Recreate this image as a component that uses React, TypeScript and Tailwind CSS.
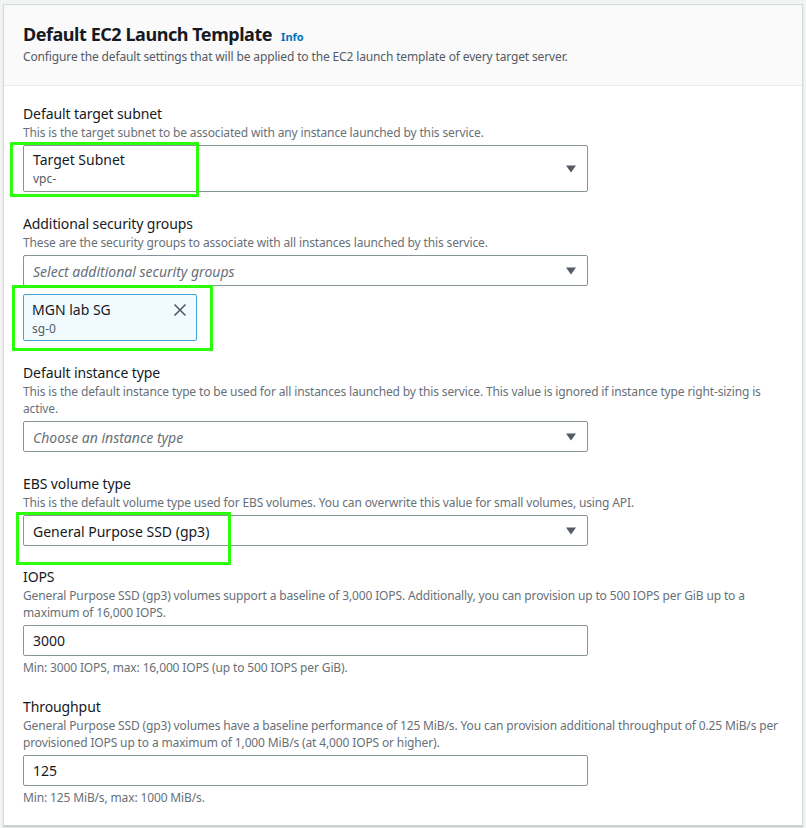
import React from "react";

const Caret: React.FC = () => (
  <svg width="12" height="8" viewBox="0 0 12 8" className="shrink-0">
    <path d="M1 0.5 H11 L6 7.5 Z" fill="#545b64" />
  </svg>
);

const Field: React.FC<{
  label: string;
  desc: string;
  className?: string;
  children: React.ReactNode;
}> = ({ label, desc, className, children }) => (
  <div className={className}>
    <div className="text-[14px] leading-[21px] tracking-[-0.1px] text-[#16191f]">{label}</div>
    <div className="text-[12px] leading-[17px] tracking-[-0.14px] text-[#687078]">{desc}</div>
    <div className="mt-[4px]">{children}</div>
  </div>
);

const Select: React.FC<{ children: React.ReactNode; tall?: boolean }> = ({
  children,
  tall,
}) => (
  <div
    className={
      "w-[565px] border border-[#879596] rounded-[2px] bg-white flex items-center justify-between pl-[9px] pr-[10px] " +
      (tall ? "h-[47px]" : "h-[31px]")
    }
  >
    <div className="min-w-0">{children}</div>
    <Caret />
  </div>
);

const Hint: React.FC<{ children: React.ReactNode }> = ({ children }) => (
  <div className="mt-[3px] text-[12px] leading-[18px] tracking-[-0.14px] text-[#687078]">{children}</div>
);

export default function App() {
  return (
    <div
      className="min-h-[828px] bg-[#f2f3f3] pt-[4px] pl-[3px] pr-[3px]"
      style={{ fontFamily: '"Noto Sans", "Open Sans", Arial, sans-serif' }}
    >
      <div className="relative w-[800px] h-[822px] bg-white border border-[#d5dbdb] shadow-[0_1px_1px_rgba(0,28,36,0.2)]">
        <div className="h-[81px] bg-[#fafafa] border-b border-[#eaeded] px-[19px] pt-[17px]">
          <div className="flex items-baseline gap-[9px]">
            <h1 className="text-[18px] leading-[24px] font-bold tracking-[-0.45px] text-[#16191f]">
              Default EC2 Launch Template
            </h1>
            <span className="text-[11px] font-bold text-[#0073bb]">Info</span>
          </div>
          <p className="text-[12px] leading-[17px] tracking-[-0.14px] text-[#545b64] mt-[2px]">
            Configure the default settings that will be applied to the EC2 launch template of every target server.
          </p>
        </div>

        <div className="px-[19px] pt-[17px]">
          <Field
            label="Default target subnet"
            desc="This is the target subnet to be associated with any instance launched by this service."
          >
            <Select tall>
              <div className="text-[14px] leading-[20px] text-[#16191f]">Target Subnet</div>
              <div className="text-[12px] leading-[16px] text-[#545b64] mt-[1px]">vpc-</div>
            </Select>
          </Field>

          <Field
            className="mt-[21px]"
            label="Additional security groups"
            desc="These are the security groups to associate with all instances launched by this service."
          >
            <Select>
              <span className="text-[14px] italic text-[#687078]">Select additional security groups</span>
            </Select>
            <div className="mt-[8px] w-[174px] h-[47px] border border-[#44a4d6] rounded-[2px] bg-[#f1faff] flex justify-between pl-[8px] pr-[9px] pt-[5px]">
              <div>
                <div className="text-[14px] leading-[20px] text-[#16191f]">MGN lab SG</div>
                <div className="text-[12px] leading-[16px] text-[#545b64] mt-[1px]">sg-0</div>
              </div>
              <svg width="14" height="14" viewBox="0 0 14 14" className="mt-[3px]">
                <path d="M1.5 1.5 L12.5 12.5 M12.5 1.5 L1.5 12.5" stroke="#545b64" strokeWidth="1.6" fill="none" />
              </svg>
            </div>
          </Field>

          <Field
            className="mt-[21px]"
            label="Default instance type"
            desc="This is the default instance type to be used for all instances launched by this service. This value is ignored if instance type right-sizing is active."
          >
            <Select>
              <span className="text-[14px] italic text-[#687078]">Choose an instance type</span>
            </Select>
          </Field>

          <Field
            className="mt-[21px]"
            label="EBS volume type"
            desc="This is the default volume type used for EBS volumes. You can overwrite this value for small volumes, using API."
          >
            <Select>
              <span className="text-[14px] text-[#16191f]">General Purpose SSD (gp3)</span>
            </Select>
          </Field>

          <Field
            className="mt-[20px]"
            label="IOPS"
            desc="General Purpose SSD (gp3) volumes support a baseline of 3,000 IOPS. Additionally, you can provision up to 500 IOPS per GiB up to a maximum of 16,000 IOPS."
          >
            <div className="w-[565px] h-[31px] border border-[#879596] rounded-[2px] bg-white flex items-center pl-[9px] text-[14px] text-[#16191f]">
              3000
            </div>
            <Hint>Min: 3000 IOPS, max: 16,000 IOPS (up to 500 IOPS per GiB).</Hint>
          </Field>

          <Field
            className="mt-[19px]"
            label="Throughput"
            desc="General Purpose SSD (gp3) volumes have a baseline performance of 125 MiB/s. You can provision additional throughput of 0.25 MiB/s per provisioned IOPS up to a maximum of 1,000 MiB/s (at 4,000 IOPS or higher)."
          >
            <div className="w-[565px] h-[31px] border border-[#879596] rounded-[2px] bg-white flex items-center pl-[9px] text-[14px] text-[#16191f]">
              125
            </div>
            <Hint>Min: 125 MiB/s, max: 1000 MiB/s.</Hint>
          </Field>
        </div>

        {/* highlight boxes */}
        <div className="absolute left-[6px] top-[137px] w-[189px] h-[55px] border-[3px] border-[#2bff0a]" />
        <div className="absolute left-[8px] top-[280px] w-[201px] h-[66px] border-[3px] border-[#2bff0a]" />
        <div className="absolute left-[12px] top-[507px] w-[215px] h-[53px] border-[3px] border-[#2bff0a]" />
      </div>
    </div>
  );
}
